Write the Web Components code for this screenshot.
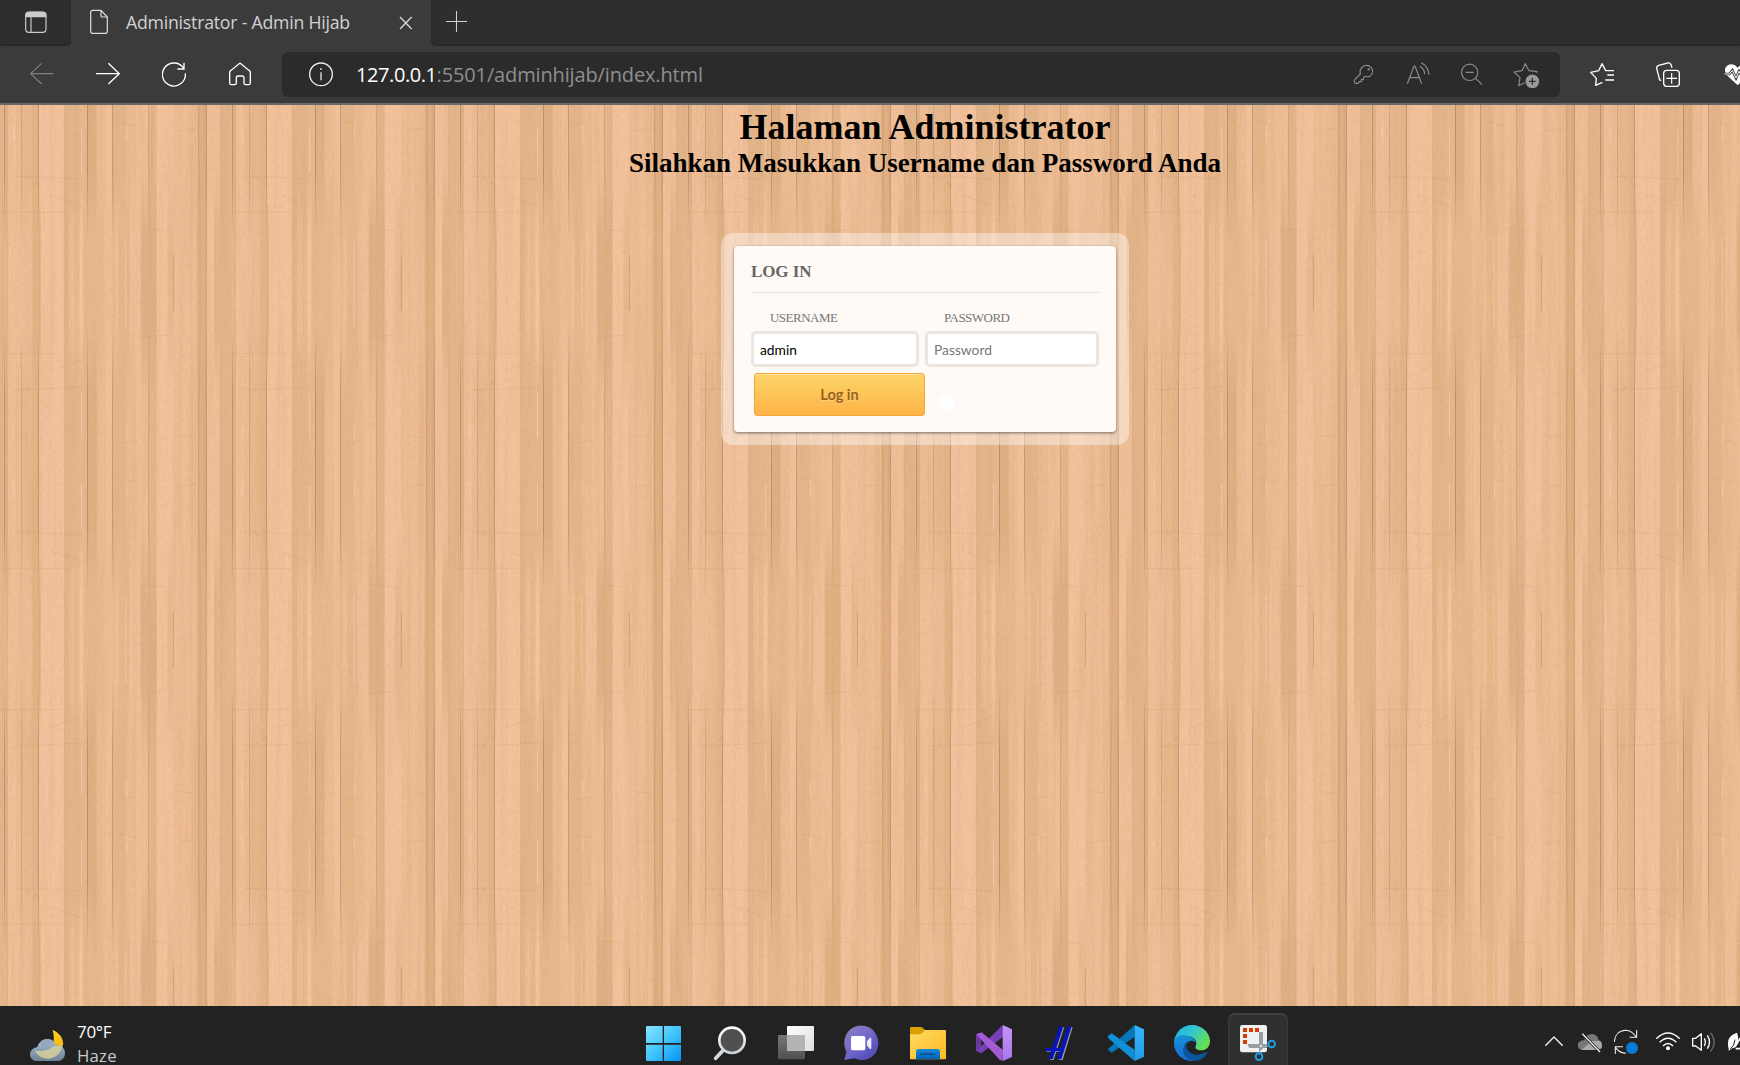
<!DOCTYPE html>
<html lang="id">
<head>
<meta charset="utf-8">
<title>Administrator - Admin Hijab</title>
<style>
html,body{margin:0;height:100%;overflow:hidden;background:#222}
</style>
</head>
<body>
<desktop-screen></desktop-screen>
<script>
const ICONS = {
workspace:['75 33 66 66',`<rect x="77" y="36" width="61" height="61" rx="10" fill="none" stroke="#ccc" stroke-width="3.5"/><path d="M77 52V45Q77 35 88 35H128Q139 35 139 45V52Z" fill="#ccc"/><path d="M93 52V97" stroke="#ccc" stroke-width="3.5"/>`],
file:['267 27 60 78',`<path d="M278 31H303L322 51V94Q322 100 316 100H278Q272 100 272 94V37Q272 31 278 31ZM303 31V47Q303 51 307 51H322" fill="none" stroke="#ddd" stroke-width="3.6"/>`],
close:['1197 48 42 42',`<path d="M1200 51L1235 87M1235 51L1200 87" stroke="#ddd" stroke-width="3.8"/>`],
plus:['1338 33 63 63',`<path d="M1338 64.5H1401M1369.500 33V96" stroke="#d0d0d0" stroke-width="3.2"/>`],
back:['90 183 72 81',`<path d="M161 221H92M125 190L92 221L125 252" fill="none" stroke="#818181" stroke-width="3.4"/>`],
forward:['288 183 72 81',`<path d="M288 221H358M325 190L358 221L325 252" fill="none" stroke="#fff" stroke-width="4"/>`],
reload:['486 183 72 81',`<path d="M552 207A34.500 34.500 0 1 0 556 220M552 188V207H532" fill="none" stroke="#fff" stroke-width="4"/>`],
home:['684 183 72 81',`<path d="M689 217Q689 214 692 212L720 189L748 212Q751 214 751 217V249Q751 254 746 254H736Q732 254 732 249V234Q732 228 726 228H714Q709 228 709 234V249Q709 254 704 254H694Q689 254 689 249Z" fill="none" stroke="#fff" stroke-width="4"/>`],
info:['927 183 72 81',`<circle cx="963" cy="223" r="34" fill="none" stroke="#eee" stroke-width="4"/><path d="M963 217V241" stroke="#ccc" stroke-width="4.500"/><circle cx="963" cy="207" r="3" fill="#ccc"/>`],
key:['156 183 72 81',`<path d="M181 222C177 207 187 196 200 196C210 196 218 204 218 214C218 227 206 233 195 229L190 234V239H184V245H178L174 250H166Q163 249 163 245V240Z" fill="none" stroke="#8a8a8a" stroke-width="3.400"/><circle cx="206" cy="208" r="3.500" fill="#8a8a8a"/>`],
read:['318 183 72 81',`<path d="M322 251L342 198H345L365 251M329 233H358M360 199Q374 208 374 223M364 188Q386 201 387 224" fill="none" stroke="#8a8a8a" stroke-width="3.600"/>`],
zoomout:['480 183 72 81',`<circle cx="509" cy="217" r="24.500" fill="none" stroke="#8a8a8a" stroke-width="3.600"/><path d="M527 235L546 254M497 217H521" stroke="#8a8a8a" stroke-width="3.600"/>`],
staradd:['636 183 84 81',`<path d="M674 248L656 257L660 233L642 216L666 212L676 191L687 212L711 215L708 219" fill="none" stroke="#8a8a8a" stroke-width="3.600" stroke-linejoin="round"/><circle cx="697" cy="244" r="20.500" fill="#999"/><path d="M687 244H707M697 234V254" stroke="#2b2b2b" stroke-width="3.600"/>`],
favorites:['870 183 72 81',`<path d="M907 247L887 256L889 235L872 217L896 212L906 191L917 212H942M922 225H942M916 240H942" fill="none" stroke="#fff" stroke-width="4" stroke-linejoin="round"/>`],
collections:['1068 183 72 81',`<path d="M1084 241L1079 240L1070 205Q1069 198 1076 196L1103 189Q1110 188 1113 194L1116 203" fill="none" stroke="#fff" stroke-width="4"/><rect x="1091" y="211" width="47" height="48" rx="9" fill="none" stroke="#fff" stroke-width="4"/><path d="M1099 235H1131M1115 219V251" stroke="#fff" stroke-width="3.500"/>`],
heart:['1266 183 72 81',`<path d="M1313 256L1279 224Q1270 207 1281 197Q1299 186 1313 203Q1327 186 1343 197Q1357 208 1343 227Z" fill="#fff"/><path d="M1270 222H1288L1297 211L1308 234L1317 214L1323 224H1345" fill="none" stroke="#3b3b3b" stroke-width="8"/><path d="M1274 222H1288L1297 211L1308 234L1317 214L1323 224H1345" fill="none" stroke="#fff" stroke-width="3"/>`],
weather:['87 117 111 99',`<defs><linearGradient id="w" x2="0" y2="1"><stop stop-color="#a9bfd4"/><stop offset="1" stop-color="#6f8294"/></linearGradient><linearGradient id="wm" x2="0" y2="1"><stop stop-color="#ffd02c"/><stop offset="1" stop-color="#f9b500"/></linearGradient></defs><path d="M158 119Q188 132 190 163Q181 178 158 169Q165 146 158 119" fill="url(#wm)"/><path d="M106 213Q90 209 90 193Q90 176 112 171Q119 147 143 147Q164 148 166 165Q194 164 195 190Q195 209 177 213Z" fill="url(#w)"/><path d="M104 181Q132 190 162 169L189 166Q178 203 148 206Q117 208 104 181" fill="#d9d39b" opacity=".8"/><path d="M117 166Q121 149 142 148Q158 149 162 162Q143 164 138 176Q130 166 117 166" fill="#90a5bb" opacity=".75"/>`],
windows:['48 75 108 111',`<defs><linearGradient id="g" x1="48" y1="78" x2="153" y2="183" gradientUnits="userSpaceOnUse"><stop stop-color="#87e4ff"/><stop offset=".5" stop-color="#42c5fb"/><stop offset="1" stop-color="#0793f5"/></linearGradient></defs><path d="M51 78H98V129H48V81Q48 78 51 78M102 78H150Q153 78 153 81V129H102ZM48 134H98V183H51Q48 183 48 180ZM102 134H153V180Q153 183 150 183H102Z" fill="url(#g)"/>`],
search:['246 75 108 111',`<defs><linearGradient id="s" x2="0" y2="1"><stop stop-color="#fff"/><stop offset="1" stop-color="#ccd1d5"/></linearGradient></defs><path d="M283 147L257 175" stroke="#d7dadd" stroke-width="11" stroke-linecap="round"/><circle cx="306" cy="121" r="38" fill="#505050" stroke="url(#s)" stroke-width="8"/>`],
taskview:['444 75 108 111',`<defs><linearGradient id="t" x2="1" y2="1"><stop stop-color="#fff"/><stop offset="1" stop-color="#ddd"/></linearGradient><linearGradient id="t2" x2="0" y2="1"><stop stop-color="#777"/><stop offset="1" stop-color="#505050"/></linearGradient></defs><rect x="444" y="105" width="81" height="73" rx="3" fill="url(#t2)"/><rect x="471" y="78" width="81" height="75" rx="3" fill="url(#t)"/><path d="M471 105H525V153H471Z" fill="#b4b4b4"/>`],
chat:['642 75 108 111',`<defs><linearGradient id="c" x2=".9" y2="1"><stop stop-color="#8d83bc"/><stop offset=".5" stop-color="#7168ce"/><stop offset="1" stop-color="#4d46b2"/></linearGradient></defs><path d="M643 180L650 153C635 119 652 78 694 78C723 78 745 101 745 129C745 160 724 180 696 180Q684 180 673 175Z" fill="url(#c)"/><path d="M649 153C634 119 652 78 694 78Q719 79 731 93" fill="none" stroke="#9388b4" stroke-width="2"/><rect x="663" y="108" width="43" height="43" rx="5" fill="#fff"/><path d="M711 124L720 113Q724 112 724 117V144Q723 148 719 146L711 136Z" fill="#eee"/>`],
folder:['840 75 108 111',`<defs><linearGradient id="f" x2="1" y2="1"><stop stop-color="#ffda66"/><stop offset="1" stop-color="#ffb91e"/></linearGradient><linearGradient id="fb" x2="0" y2="1"><stop stop-color="#1989da"/><stop offset="1" stop-color="#0062b1"/></linearGradient></defs><path d="M840 84Q840 81 843 81H872Q878 81 885 90H945V110H840Z" fill="#daa000"/><path d="M840 103H866Q874 103 885 90H944Q948 90 948 94V175Q948 178 944 178H843Q840 178 840 175Z" fill="url(#f)"/><path d="M858 178V155Q858 147 866 147H922Q930 147 930 155V178Z" fill="url(#fb)"/><path d="M871 162H915" stroke="#034c87" stroke-width="4"/>`],
vs:['48 75 108 111',`<defs><linearGradient id="v" x2="0" y2="1"><stop stop-color="#c193f5"/><stop offset="1" stop-color="#ac78ec"/></linearGradient></defs><path d="M48 103L64 98V160L48 153Z" fill="#68389d"/><path d="M128 75L50 152L64 160L130 110Z" fill="#7440b2"/><path d="M49 103L65 97L128 149V182L119 179Z" fill="#a35ad5"/><path d="M128 75L156 88V171L128 183Z" fill="url(#v)"/>`],
hash:['246 75 108 111',`<path d="M305 81H312L280 179H268ZM329 81H337L307 179H294ZM261 147H309L306 155H259Z" fill="#999" transform="translate(1 1)"/><path d="M298 79H310L278 178H265ZM323 79H335L304 178H291ZM258 144H309L306 154H256Z" fill="#0715bd"/>`],
vscode:['444 75 108 111',`<defs><linearGradient id="x" x2="0" y2="1"><stop stop-color="#36b5fa"/><stop offset="1" stop-color="#209bec"/></linearGradient></defs><path d="M524 75L445 146V151L455 158L524 110Z" fill="#0876b9"/><path d="M444 108L455 100L524 150V183L444 114Z" fill="#118fd7"/><path d="M524 75L552 88V170L524 183Z" fill="url(#x)"/>`],
edge:['642 75 108 111',`<defs><linearGradient id="e1" x2="1" y2=".5"><stop stop-color="#20ade1"/><stop offset=".5" stop-color="#32c5d3"/><stop offset="1" stop-color="#65df50"/></linearGradient><linearGradient id="e2" x2="0" y2="1"><stop stop-color="#1491d6"/><stop offset="1" stop-color="#176bd5"/></linearGradient></defs><path d="M642 128C644 96 668 75 696 75C727 75 750 99 750 123C750 141 738 151 723 151C711 151 704 146 707 139C714 123 703 112 685 109C666 106 650 113 642 128" fill="url(#e1)"/><path d="M642 130C643 109 663 103 681 107C696 110 706 119 708 129C697 116 681 123 676 137C669 160 682 180 705 182C671 188 642 162 642 130" fill="url(#e2)"/><path d="M687 119C672 131 678 161 709 164Q726 165 739 156Q743 153 742 158C733 174 718 183 703 182C678 180 663 160 672 137Q676 126 687 119" fill="#0c559d"/>`],
snip:['840 75 108 111',`<rect x="840" y="75" width="81" height="82" rx="7" fill="#eef0f1"/><path d="M849 84h12v12h-12zM867 84h12v12h-12zM885 84h12v12h-12zM849 102h12v12h-12zM849 120h12v12h-12z" fill="#d83b01"/><path d="M897 96H909V145L897 157ZM862 132H921V144H868Z" fill="#979da2"/><circle cx="903" cy="138" r="4" fill="#ddd"/><circle cx="935" cy="132" r="10" fill="none" stroke="#1e9de3" stroke-width="6"/><circle cx="897" cy="170" r="10" fill="none" stroke="#1e9de3" stroke-width="6"/><path d="M921 138L927 137M903 157L901 161" stroke="#1e9de3" stroke-width="6"/>`],
chevron:['135 84 54 81',`<path d="M136 137L162 111L188 137" fill="none" stroke="#eee" stroke-width="4"/>`],
cloud:['234 84 72 81',`<path d="M249 150Q233 149 233 135Q234 122 253 120Q257 102 276 102Q292 103 296 120Q307 124 306 137Q305 150 292 150Z" fill="#777"/><path d="M244 150L276 123H300Q309 133 304 144Q300 150 290 150Z" fill="#aaa"/><path d="M247 101L300 156" stroke="#222" stroke-width="9"/><path d="M247 101L300 156" stroke="#eee" stroke-width="4"/>`],
sync:['342 84 72 81',`<path d="M343 126C344 105 357 92 377 91Q396 92 409 112M410 90V112H389M369 140H346V162M347 143Q359 160 378 160" fill="none" stroke="#eee" stroke-width="3.200"/><circle cx="396" cy="144" r="18" fill="#0879d9"/>`],
wifi:['468 84 72 81',`<path d="M469 116Q504 82 539 116M479 127Q504 103 529 127M489 138Q504 123 519 138" fill="none" stroke="#fff" stroke-width="4.500"/><circle cx="504" cy="145" r="6" fill="#fff"/>`],
sound:['576 84 72 81',`<path d="M578 115H587L604 101V151L587 138H578Z" fill="none" stroke="#fff" stroke-width="4" stroke-linejoin="round"/><path d="M613 115Q619 126 613 138M622 106Q635 126 622 146" fill="none" stroke="#fff" stroke-width="4"/><path d="M631 98Q654 126 631 155" fill="none" stroke="#666" stroke-width="4"/>`],
leaf:['684 84 72 81',`<path d="M686 146C679 119 689 106 711 98Q721 127 706 142L697 145L686 152Z" fill="#fff"/><path d="M691 147Q703 138 705 119" fill="none" stroke="#222" stroke-width="3"/><path d="M708 136L723 111M707 146H730" stroke="#fff" stroke-width="5"/>`]
};
function define(name, html, cls){
  customElements.define(name, cls || class extends HTMLElement{
    constructor(){ super(); this.attachShadow({mode:'open'}).innerHTML = html; }
  });
}
define('ui-icon','',class extends HTMLElement{
  connectedCallback(){
    const [vb, body] = ICONS[this.getAttribute('name')];
    const [, , w, h] = vb.split(' ').map(Number);
    const root = this.shadowRoot || this.attachShadow({mode:'open'});
    root.innerHTML = `<style>:host{display:block;flex:none;line-height:0}svg{display:block}</style><svg width="${w/3}" height="${h/3}" viewBox="${vb}">${body}</svg>`;
  }
});
define('tab-strip',`<style>
:host{display:flex;height:46px;background:#3b3b3b;font-family:"Open Sans",sans-serif}
.lead,.rest{background:#2e2e2e;box-shadow:inset 0 -2px 1px #292929;box-sizing:border-box;height:46px}
.lead{width:70.500px;border-radius:0 0 5px 0;padding:11px 0 0 25px}
.tab{width:360.500px;display:flex;align-items:center;height:44px;box-sizing:border-box;padding:0 18px 0 18.500px}
.title{font-size:17.700px;color:#d2d2d2;margin:-1px 0 0 17px;flex:1;white-space:nowrap;letter-spacing:-.22px}
.tab :last-child{margin-top:2px}
.rest{flex:1;border-radius:0 0 0 5px;padding:11px 0 0 15px}
</style><div class="lead"><ui-icon name="workspace"></ui-icon></div>
<div class="tab"><ui-icon name="file"></ui-icon><span class="title"><slot></slot></span><ui-icon name="close"></ui-icon></div>
<div class="rest"><ui-icon name="plus"></ui-icon></div>`);
define('tool-bar',`<style>
:host{display:flex;height:59px;box-sizing:border-box;border-bottom:2px solid #686868;background:#3b3b3b;align-items:center;padding-left:30px;overflow:hidden}
.nav,.more{display:flex;gap:42px;flex:none}
.address{width:1278px;height:45px;flex:none;box-sizing:border-box;margin:0 30px;border-radius:6px;background:#2b2b2b;display:flex;align-items:center;padding:0 20px 0 27px}
.url{flex:1;margin-left:23px;font:20px "Open Sans",sans-serif;letter-spacing:-.14px;color:#8f8f8f;white-space:nowrap}
.url b{font-weight:400;color:#fff;letter-spacing:-.42px}
.acts{display:flex;gap:30px}.acts :last-child{margin-left:-2px}
</style><div class="nav"><ui-icon name="back"></ui-icon><ui-icon name="forward"></ui-icon><ui-icon name="reload"></ui-icon><ui-icon name="home"></ui-icon></div>
<div class="address"><ui-icon name="info"></ui-icon><span class="url"><b>127.0.0.1</b>:5501/adminhijab/index.html</span>
<div class="acts"><ui-icon name="key"></ui-icon><ui-icon name="read"></ui-icon><ui-icon name="zoomout"></ui-icon><ui-icon name="staradd"></ui-icon></div></div>
<div class="more"><ui-icon name="favorites"></ui-icon><ui-icon name="collections"></ui-icon><ui-icon name="heart"></ui-icon></div>`);

/* Veneer: one half tile, mirrored downwards, repeated every 228 x 356 px.
   EDGE holds the bands at the tile's outer edge, HEART those that fade in towards the mirror line. */
const EDGE = [
 [0,14,'#e5b68b'],[14,24,'#e2b287'],[24,48,'#f0bf99'],[48,64,'#ebbb92'],[64,96,'#e8b78d'],[96,116,'#e4b488'],
 [116,194,'#f3c29d'],[192,240,'#e4b58a'],[238,262,'#e7b78d'],[262,292,'#e0af82'],[290,318,'#ecbb92'],[318,338,'#f2c19c'],
 [338,380,'#e5b58a'],[378,408,'#ecba92'],[408,446,'#efbe97'],[445,471,'#e5b58a'],[470,520,'#f3c29d'],[519,576,'#eebc95'],
 [575,596,'#e9b88e'],[595,619,'#e1af83'],[619,661,'#f0bf99'],[660,684,'#e4b489']];
const HEART = [
 [0,26,'#e7b88d'],[26,60,'#f0bf99'],[60,98,'#eebc95'],[98,122,'#e4b489'],[122,194,'#f3c29d'],[192,208,'#e4b489'],[208,238,'#e9b98f'],
 [238,252,'#f4c5a0'],[250,316,'#e8b88d'],[314,356,'#eebd96'],[356,390,'#e8b78c'],[388,424,'#efbf99'],[422,471,'#e1b084'],
 [470,502,'#f3c29d'],[502,524,'#ebb98f'],[522,592,'#eebd96'],[590,622,'#e1b083'],[622,643,'#f3c19b'],[642,684,'#e4b489']];
const LINES = [[5,'#cf9c6e',.25],[18,'#c99264',.3],[113,'#c78f60',.2],[193,'#cf9a6c',.25],[204,'#cf9f72',.2],[338,'#cc9869',.3],[446,'#d09b6b',.3],[597,'#c68f60',.35],[615,'#bf8659',.4],[661,'#cc9669',.25],[64,'#f4c8a1',.4],[540,'#dba779',.3],[555,'#f4c7a0',.4],[572,'#d8a376',.3],[390,'#f1c29b',.4],[428,'#d9a77a',.3],[150,'#e5b189',.4],[172,'#f7cba7',.35],[310,'#f0c198',.5]];
const bars = list => list.map(([a,b,c])=>`<rect x="${a}" width="${b-a}" height="535" fill="${c}"/>`).join('');
const half = bars(EDGE)
 + `<g mask="url(#fade)">${bars(HEART)}<path d="M643 330V535M356 400V535M120 300V535" stroke="#cb9767" stroke-opacity=".45" stroke-width="2.500"/><path d="M520 450V535" stroke="#b98256" stroke-opacity=".5" stroke-width="3"/><path d="M641 330V535M210 330V535M219 320V535M28 420V535M355 400V535M378 400V535" stroke="#f7cba6" stroke-opacity=".8" stroke-width="2.500"/></g>`
 + LINES.map(([x,c,o])=>`<path d="M${x} 0V150L${x+3} 330V535" fill="none" stroke="${c}" stroke-opacity="${o}" stroke-width="2.500"/>`).join('')
 + `<path d="M380 55V110M245 70V205M42 60V110" stroke="#fbd2b0" stroke-opacity=".8" stroke-width="2.500"/>
 <path d="M45 214Q110 213 248 223M0 322H190M150 269L245 303M420 370L500 378M350 50L410 63M535 77L590 70" stroke="#b78355" stroke-opacity=".17" stroke-width="3" fill="none"/>
 <path d="M105 230L118 245M78 208L90 225" stroke="#b78355" stroke-opacity=".14" stroke-width="5"/>`;
define('wood-panel',`<style>:host{display:grid;overflow:hidden;min-height:0}svg,.content{grid-area:1/1}svg{display:block;width:1740px;height:901px}.content{z-index:1}</style>
<svg viewBox="0 0 1740 901"><defs>
<linearGradient id="ramp" x1="0" y1="200" x2="0" y2="410" gradientUnits="userSpaceOnUse"><stop stop-color="#000"/><stop offset="1" stop-color="#fff"/></linearGradient>
<mask id="fade" maskUnits="userSpaceOnUse" x="0" y="0" width="684" height="535"><rect width="684" height="535" fill="url(#ramp)"/></mask>
<filter id="grain" x="0" y="0" width="100%" height="100%"><feTurbulence type="fractalNoise" baseFrequency=".35 .22" numOctaves="3" seed="4"/><feColorMatrix values="0 0 0 0 .55  0 0 0 0 .34  0 0 0 0 .17  .9 0 0 0 -.36"/></filter>
<filter id="fibre" x="0" y="0" width="100%" height="100%"><feTurbulence type="fractalNoise" baseFrequency=".16 .006" numOctaves="3" seed="9"/><feColorMatrix values="0 0 0 0 .6  0 0 0 0 .36  0 0 0 0 .17  1.200 0 0 0 -.54"/></filter>
<g id="half">${half}</g>
<pattern id="veneer" width="684" height="1068" patternUnits="userSpaceOnUse" patternTransform="scale(.33333333)"><use href="#half"/><use href="#half" transform="translate(0 1068) scale(1 -1)"/></pattern></defs>
<rect width="1740" height="901" fill="url(#veneer)"/><rect width="1740" height="901" filter="url(#fibre)" opacity=".4"/><rect width="1740" height="901" filter="url(#grain)" opacity=".4"/></svg>
<div class="content"><slot></slot></div>`);
define('page-heading',`<style>
:host{display:block;margin-left:110px;text-align:center;font-family:"Liberation Serif",serif;color:#000;padding-top:1px}
h1,h2{margin:0;font-weight:700;white-space:nowrap}
h1{font-size:36px;line-height:42px}h2{font-size:27px;line-height:30px}
</style><h1><slot name="title"></slot></h1><h2><slot name="sub"></slot></h2>`);
define('text-field',`<style>
:host{display:flex;flex-direction:column;font-family:"Liberation Serif",serif}
.label{font-size:13px;line-height:16px;letter-spacing:-.52px;color:#777;padding-left:19px;height:21px;white-space:nowrap}
.box{height:36px;box-sizing:border-box;border:3px solid #ebe6e2;border-radius:5px;background:#fff;padding:0 6px;font:13.800px/31px Lato,sans-serif;color:var(--ink,#777)}
</style><div class="label"><slot name="label"></slot></div><div class="box"><slot></slot></div>`);
define('login-card',`<style>
:host{display:block;width:408px;box-sizing:border-box;margin:55px 0 0 721px;padding:13px;border-radius:12px;background:rgba(255,255,255,.4)}
.card{box-sizing:border-box;height:186px;background:#fffaf6;border-radius:4px;padding:0 17px;box-shadow:0 1px 3px rgba(0,0,0,.5)}
h3{margin:0;height:47px;box-sizing:border-box;padding-top:15px;border-bottom:1px solid #e5e0dc;font:700 17px/21px "Liberation Serif",serif;letter-spacing:-.1px;color:#666}
.fields{display:grid;grid-template-columns:168px 174px;gap:6px;padding-top:17px}
.row{display:flex;margin-top:6px;padding-left:3px}
button{width:171px;height:43px;padding:1px 0 0;border:1px solid #f4a63c;border-radius:3px;background:linear-gradient(#fbd568,#ffb347);box-shadow:inset 0 1px rgba(255,255,255,.35);font:700 14.500px/20px Lato,sans-serif;color:#996319;text-shadow:0 1px rgba(255,255,255,.3)}
i{width:16px;height:16px;border-radius:50%;background:#fff;margin:22px 0 0 14px}
</style><div class="card"><h3>LOG IN</h3><div class="fields"><text-field style="--ink:#000"><span slot="label">USERNAME</span>admin</text-field><text-field><span slot="label">PASSWORD</span>Password</text-field></div>
<div class="row"><button>Log in</button><i></i></div></div>`);
define('task-bar',`<style>
:host{display:grid;grid-template-columns:646px 899px 1fr;height:59px;background:#222;overflow:hidden;font-family:"Open Sans",sans-serif}
.weather{display:flex;padding:23px 0 0 29px;gap:11px}
.txt{font-size:17px;line-height:24px;color:#fff;margin-top:-9px;white-space:nowrap;letter-spacing:-.3px}
.txt div+div{color:#c9c9c9;letter-spacing:.2px;font-size:16.800px;line-height:18px;margin-top:3px}
.apps{display:flex;gap:30px;padding-top:19px}
.active{margin:-12px 0 0 -12px;height:60px;width:60px;box-sizing:border-box;padding:10px 0 0 11px;background:#303030;border:1px solid #3a3a3a;border-top:2px solid #414141;border-radius:7px 7px 0 0}
.tray{display:flex;padding-top:22px}
.tray :nth-child(2){margin-left:15px}.tray :nth-child(3){margin-left:12px}.tray :nth-child(4){margin-left:18px}.tray :nth-child(5),.tray :nth-child(6){margin-left:12px}
</style><div class="weather"><ui-icon name="weather"></ui-icon><div class="txt"><div>70°F</div><div>Haze</div></div></div>
<div class="apps">${['windows','search','taskview','chat','folder','vs','hash','vscode','edge'].map(n=>`<ui-icon name="${n}"></ui-icon>`).join('')}<div class="active"><ui-icon name="snip"></ui-icon></div></div>
<div class="tray">${['chevron','cloud','sync','wifi','sound','leaf'].map(n=>`<ui-icon name="${n}"></ui-icon>`).join('')}</div>`);
define('desktop-screen',`<style>:host{display:grid;grid-template-rows:46px 59px 901px 59px;grid-template-columns:1740px;width:1740px;height:1065px;overflow:hidden}</style>
<tab-strip>Administrator - Admin Hijab</tab-strip><tool-bar></tool-bar>
<wood-panel><page-heading><span slot="title">Halaman Administrator</span><span slot="sub">Silahkan Masukkan Username dan Password Anda</span></page-heading><login-card></login-card></wood-panel><task-bar></task-bar>`);
</script>
</body>
</html>
